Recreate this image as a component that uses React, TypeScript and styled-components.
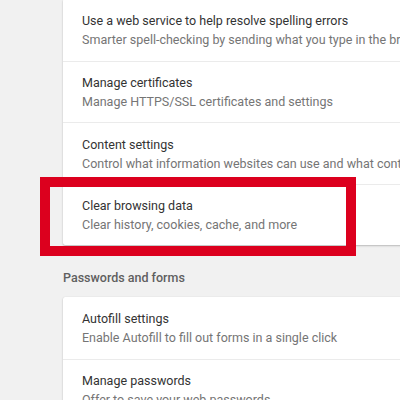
import React from 'react';
import styled, { createGlobalStyle } from 'styled-components';

const GlobalStyle = createGlobalStyle`
  html, body {
    margin: 0;
    padding: 0;
    background: #f1f1f1;
    font-family: Roboto, "Liberation Sans", sans-serif;
    overflow: hidden;
  }
`;

const Page = styled.div`
  position: relative;
  width: 400px;
  height: 400px;
  overflow: hidden;
  padding-left: 63px;
  box-sizing: border-box;
`;

const Card = styled.div<{ $offset?: number }>`
  width: 600px;
  margin-top: ${props => props.$offset ?? 0}px;
  background: #ffffff;
  border-radius: 2px;
  box-shadow: 0 1px 2px rgba(0, 0, 0, 0.22), 0 0 1px rgba(0, 0, 0, 0.12);
`;

const Row = styled.div`
  height: 61.5px;
  box-sizing: border-box;
  padding: 12.5px 19px 0;
  border-top: 1px solid #ebebeb;

  &:first-child {
    border-top: none;
  }
`;

const Title = styled.div`
  font-size: 12.5px;
  line-height: 18px;
  color: #333333;
  white-space: nowrap;
`;

const Subtitle = styled.div`
  font-size: 12.5px;
  line-height: 20px;
  color: #757575;
  white-space: nowrap;
`;

const SectionHeader = styled.div`
  padding: 25px 0 11px;
  font-size: 12.5px;
  line-height: 16px;
  font-weight: 500;
  color: #5f5f5f;
`;

const Highlight = styled.div`
  position: absolute;
  left: 40px;
  top: 177px;
  width: 316px;
  height: 79px;
  box-sizing: border-box;
  border: 10px solid #dc001e;
  pointer-events: none;
`;

interface Item {
  title: string;
  subtitle: string;
}

const privacyItems: Item[] = [
  {
    title: 'Use a web service to help resolve spelling errors',
    subtitle: 'Smarter spell-checking by sending what you type in the browser to Google',
  },
  { title: 'Manage certificates', subtitle: 'Manage HTTPS/SSL certificates and settings' },
  {
    title: 'Content settings',
    subtitle: 'Control what information websites can use and what content they can show you',
  },
  { title: 'Clear browsing data', subtitle: 'Clear history, cookies, cache, and more' },
];

const passwordItems: Item[] = [
  { title: 'Autofill settings', subtitle: 'Enable Autofill to fill out forms in a single click' },
  { title: 'Manage passwords', subtitle: 'Offer to save your web passwords' },
];

function SettingsCard({ items, offset }: { items: Item[]; offset?: number }) {
  return (
    <Card $offset={offset}>
      {items.map(item => (
        <Row key={item.title}>
          <Title>{item.title}</Title>
          <Subtitle>{item.subtitle}</Subtitle>
        </Row>
      ))}
    </Card>
  );
}

export default function App() {
  return (
    <>
      <GlobalStyle />
      <Page>
        <SettingsCard items={privacyItems} offset={-1} />
        <SectionHeader>Passwords and forms</SectionHeader>
        <SettingsCard items={passwordItems} />
        <Highlight />
      </Page>
    </>
  );
}
